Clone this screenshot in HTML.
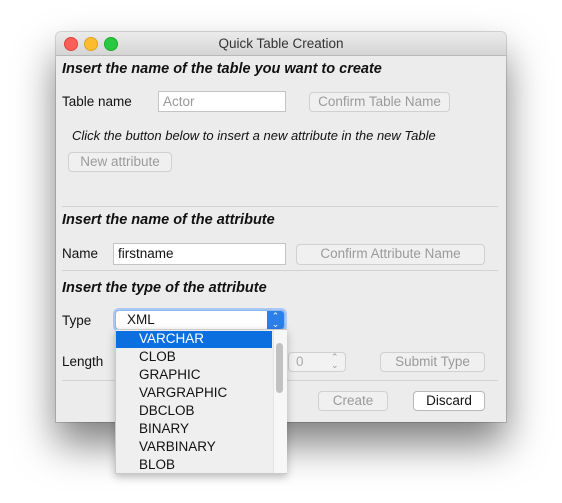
<!DOCTYPE html>
<html><head><meta charset="utf-8"><style>
body{margin:0;width:562px;height:503px;background:#fff;position:relative;overflow:hidden;font-family:"Liberation Sans",sans-serif;font-size:13.5px;color:#111}
.a{position:absolute;white-space:nowrap}
#win{left:56px;top:32px;width:450px;height:390px;background:#ececec;border-radius:5px 5px 0 0;box-shadow:0 22px 40px rgba(0,0,0,.5),0 0 0 1px rgba(0,0,0,.15)}
#tb{left:56px;top:32px;width:450px;height:23px;background:linear-gradient(#ebebeb,#d5d5d5);border-radius:5px 5px 0 0;border-bottom:1px solid #b8b8b8;text-align:center;line-height:23px;color:#333;font-size:13.5px}
.dot{width:12px;height:12px;border-radius:50%;top:37px}
.h{font-weight:bold;font-style:italic;font-size:14.5px}
.tf{background:#fff;border:1px solid #c4c4c4;box-sizing:border-box;padding-left:4px;line-height:19px}
.btn{background:#f0f0f0;border:1px solid #d0d0d0;border-radius:4px;box-sizing:border-box;text-align:center;line-height:18px;color:#9a9a9a}
.sep{height:1px;background:#d2d2d2;left:62px;width:436px}
.it{left:139px;height:18px;line-height:18px}
</style></head><body>
<div class="a" id="win"></div>
<div class="a" id="tb">Quick Table Creation</div>
<div class="a dot" style="left:64px;background:#fc5f57;border:.5px solid #de4640"></div>
<div class="a dot" style="left:84px;background:#fdbc2e;border:.5px solid #dea123"></div>
<div class="a dot" style="left:104px;background:#28c840;border:.5px solid #1eab2e"></div>

<div class="a h" style="left:62px;top:61px">Insert the name of the table you want to create</div>
<div class="a" style="left:62px;top:94px">Table name</div>
<div class="a tf" style="left:158px;top:91px;width:128px;height:21px;color:#999">Actor</div>
<div class="a btn" style="left:309px;top:92px;width:141px;height:20px">Confirm Table Name</div>
<div class="a" style="left:72px;top:128px;font-style:italic;font-size:13px">Click the button below to insert a new attribute in the new Table</div>
<div class="a btn" style="left:68px;top:152px;width:104px;height:20px">New attribute</div>

<div class="a sep" style="top:206px"></div>
<div class="a h" style="left:62px;top:212px">Insert the name of the attribute</div>
<div class="a" style="left:62px;top:246px">Name</div>
<div class="a tf" style="left:113px;top:243px;width:173px;height:22px;color:#111">firstname</div>
<div class="a btn" style="left:296px;top:244px;width:189px;height:21px">Confirm Attribute Name</div>
<div class="a sep" style="top:270px"></div>
<div class="a h" style="left:62px;top:280px">Insert the type of the attribute</div>

<div class="a" style="left:62px;top:313px">Type</div>
<div class="a" style="left:115px;top:310px;width:170px;height:20px;background:#fff;border:1px solid #8fb6ee;border-radius:4px;box-sizing:border-box;box-shadow:0 0 0 2px #a9c8f5"></div>
<div class="a" style="left:127px;top:312px">XML</div>
<div class="a" style="left:267px;top:311px;width:17px;height:18px;background:#2d7fe8;border-radius:0 3px 3px 0;color:#fff;font-size:9px;text-align:center;line-height:8px;padding-top:1px;box-sizing:border-box">⌃<br>⌄</div>

<div class="a" style="left:62px;top:354px">Length</div>
<div class="a" style="left:288px;top:352px;width:58px;height:20px;background:#f2f2f2;border:1px solid #d0d0d0;border-radius:4px;box-sizing:border-box"></div>
<div class="a" style="left:296px;top:354px;color:#aaa">0</div>
<div class="a" style="left:331px;top:353px;color:#999;font-size:9px;line-height:8px">⌃<br>⌄</div>
<div class="a btn" style="left:380px;top:352px;width:105px;height:20px">Submit Type</div>
<div class="a sep" style="top:380px"></div>
<div class="a btn" style="left:318px;top:391px;width:70px;height:20px">Create</div>
<div class="a btn" style="left:413px;top:391px;width:72px;height:20px;background:#fff;border-color:#b8b8b8;color:#111">Discard</div>

<div class="a" style="left:115px;top:329px;width:172px;height:145px;background:#efefef;border:1px solid #c8c8c8;box-sizing:border-box;box-shadow:0 3px 8px rgba(0,0,0,.25)"></div>
<div class="a" style="left:116px;top:331px;width:156px;height:17px;background:#0c6fe0"></div>
<div class="a" style="left:273px;top:330px;width:13px;height:143px;background:#f7f7f7;border-left:1px solid #e3e3e3"></div>
<div class="a" style="left:276px;top:343px;width:7px;height:50px;background:#c1c1c1;border-radius:4px"></div>
<div class="a it" style="top:330px;color:#fff">VARCHAR</div>
<div class="a it" style="top:348px">CLOB</div>
<div class="a it" style="top:366px">GRAPHIC</div>
<div class="a it" style="top:384px">VARGRAPHIC</div>
<div class="a it" style="top:402px">DBCLOB</div>
<div class="a it" style="top:420px">BINARY</div>
<div class="a it" style="top:438px">VARBINARY</div>
<div class="a it" style="top:456px">BLOB</div>
</body></html>
